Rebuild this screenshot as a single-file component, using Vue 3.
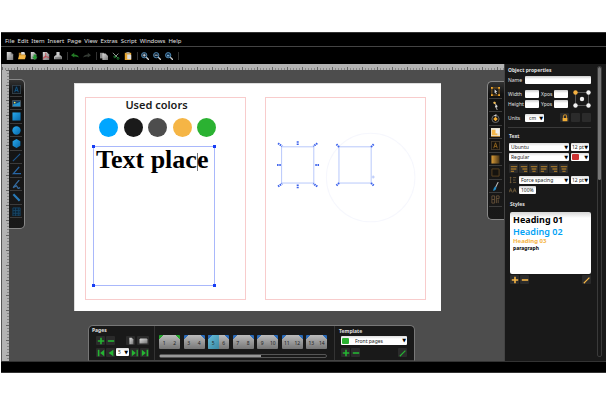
<script setup>
import { h, ref } from 'vue'

const shapes = {
  doc: '<path d="M1 0h5l3 3v7H1z" fill="url(#silver)"/><path d="M6 0v3h3" fill="#777"/>',
  open: '<path d="M1 1h3l1 1h4v6H1z" fill="#b7822a"/><path d="M4 0h4l1 3H4z" fill="#ddd"/><path d="M0 9l1.500-5H10L8.500 9z" fill="#f5b745"/>',
  save: '<path d="M1 0h4l3 3v6H1z" fill="url(#silver)"/><path d="M4.500 3h3v3H9.500L6 10 2.500 6h2z" fill="#279a35"/>',
  pdf: '<path d="M1 0h5l3 3v7H1z" fill="url(#silver)"/><path d="M1.500 9C5 6 5 4 4.500 1M1.500 7C4 5 6 6 9 7" fill="none" stroke="#c5303a"/>',
  print: '<path d="M3 0h4v5H3z" fill="#ccc"/><path d="M0 9V6l2-2h6l2 2v3z" fill="url(#silver)"/><path d="M1 7.500h8" stroke="#555"/>',
  undo: '<path d="M0 4l4-3v2c3 0 5 1 6 4-2-1.500-4-1.500-6-1.500V7z" fill="#237b25"/>',
  redo: '<path d="M10 4L6 1v2C3 3 1 4 0 7c2-1.500 4-1.500 6-1.500V7z" fill="#343a34"/>',
  copy: '<path d="M0 1h5v7H0z" fill="#888"/><path d="M3 2h4l3 3v5H3z" fill="url(#silver)"/>',
  cut: '<path d="M1 1l6 6M8 2L4 6" stroke="#999" stroke-width="1.200"/><circle cx="3.500" cy="6" r="1.200" fill="none" stroke="#239638"/><circle cx="7.500" cy="8" r="1.200" fill="none" stroke="#239638"/>',
  paste: '<path d="M1 1h8v9H1z" fill="#e5a52e"/><path d="M3 0h4v2H3z" fill="#999"/><path d="M4 3h4l1 1v5H4z" fill="#ddd"/>',
  zoomIn: '<path d="M6 6l4 4" stroke="#ccc" stroke-width="1.600"/><circle cx="4" cy="4" r="3.300" fill="#061a2d" stroke="#5b95c0" stroke-width="1.100"/><path d="M2 4h4M4 2v4" stroke="#eee"/>',
  zoomOut: '<path d="M6 6l4 4" stroke="#ccc" stroke-width="1.600"/><circle cx="4" cy="4" r="3.300" fill="#061a2d" stroke="#5b95c0" stroke-width="1.100"/><path d="M2 4h4" stroke="#eee"/>',
  zoomFit: '<path d="M6 6l4 4" stroke="#ccc" stroke-width="1.600"/><circle cx="4" cy="4" r="3.300" fill="#0b2b48" stroke="#5b95c0" stroke-width="1.100"/><path d="M2.500 3.500h3v2h-3z" fill="#7ba8ca"/>',
  textBlue: '<rect x=".500" y=".500" width="9" height="9" fill="#101820" stroke="#34414a"/><path d="M3 8l2-6 2 6M3.500 6h3" fill="none" stroke="#125a8c"/>',
  image: '<rect x="0" y="1" width="10" height="8" rx="1" fill="#4c5358"/><path d="M1 2h8v6H1z" fill="#123e64"/><path d="M1 8V6l4-1 4-2v5z" fill="#2190ca"/><circle cx="3" cy="4" r="1" fill="#f1dd59"/>',
  square: '<path d="M.500.500h9v9h-9z" fill="url(#blue)"/>',
  disc: '<circle cx="5" cy="5" r="4.600" fill="url(#blue)"/>',
  hexagon: '<path d="M5 0l4.300 2.500v5L5 10 .700 7.500v-5z" fill="url(#blue)"/>',
  line: '<path d="M1 9l8-8" stroke="#1c568e" stroke-width="1.200"/>',
  angle: '<path d="M8 1L1.500 8.500H10" fill="none" stroke="#2866a5" stroke-width="1.500"/>',
  bezier: '<path d="M8 0L1.500 8M1 8.500l4-2 2 3 2-1" fill="none" stroke="#356a9d" stroke-width="1.400"/>',
  pencil: '<path d="M1.500 1.500l7 7" stroke="#2879b6" stroke-width="2.400"/>',
  table: '<path d="M1 1h8v9H1zM1 4h8M1 7h8M4 1v9M7 1v9" fill="#0b2130" stroke="#174668"/>',
  select: '<path d="M1 1h8v8H1z" fill="none" stroke="#8c601b"/><path d="M0 0h2v2H0zM8 0h2v2H8zM0 8h2v2H0zM8 8h2v2H8z" fill="#f1a82f"/><path d="M4 2.500l3 3H5.500l1 2-1 .500-.700-2L4 7z" fill="#ddd"/>',
  node: '<path d="M3 1l3 4-1 1 2 4" fill="none" stroke="#999" stroke-width="1.200"/><circle cx="4" cy="2" r="1.300" fill="#f1bb50"/><circle cx="6" cy="6" r="1.200" fill="#ddd"/>',
  rotate: '<circle cx="5" cy="5.500" r="4" fill="none" stroke="#777"/><path d="M5 3l2.500 2.500L5 8 2.500 5.500z" fill="#f5ad31"/><path d="M3 2l3-2v3z" fill="#ccc"/>',
  scale: '<path d="M0 0h10v10H0z" fill="#e9e1cf"/><path d="M1 2h6v6H1z" fill="#f4b648"/><path d="M5 1h4v5H5z" fill="#eee"/><path d="M0 9.500h10" stroke="#a46e1b"/>',
  textGold: '<rect x=".500" y=".500" width="9" height="9" fill="#17130d" stroke="#453a2b"/><path d="M3 8l2-6 2 6M3.500 6h3" fill="none" stroke="#94651d"/>',
  gradient: '<path d="M.500.500h9v9h-9z" fill="url(#goldfade)"/>',
  frame: '<path d="M1 1h8v8H1z" fill="#15130f" stroke="#5d4522"/>',
  brush: '<path d="M8 0L5 6" stroke="#bbb" stroke-width="1.200"/><path d="M4.500 5l1.500 1C5.500 9 4 10 2 9.500 3 8.500 3 6 4.500 5z" fill="#258dc7"/>',
  effects: '<path d="M1 1h3v8H1zM1 5h3M6 1v8M6 1h3v3H6M8 5v4" fill="none" stroke="#675139"/>',
  plus: '<path d="M5 1v8M1 5h8" stroke="currentColor" stroke-width="2"/>',
  minus: '<path d="M1 5h8" stroke="currentColor" stroke-width="2"/>',
  edit: '<path d="M2 8l6-6M1 9l2-2" stroke="currentColor" stroke-width="1.600"/>',
  first: '<path d="M1 1v8h2V1zM9 1L4 5l5 4z" fill="currentColor"/>',
  prev: '<path d="M8 1L2 5l6 4z" fill="currentColor"/>',
  next: '<path d="M1 1l5 4-5 4zM7 1v8h1.500V1z" fill="currentColor"/>',
  last: '<path d="M1 1l5 4-5 4zM7 1v8h2V1z" fill="currentColor"/>',
  single: '<path d="M3 1h3l2 2v6H3z" fill="url(#silver)"/>',
  spread: '<path d="M1 2h8l1 1v5H0V3z" fill="url(#silver)"/>',
  lock: '<path d="M3 5V3a2 2 0 0 1 4 0v2" fill="none" stroke="#c98d2b" stroke-width="1.300"/><path d="M2 5h6v4H2z" fill="#f2ae36"/>',
  alignLeft: '<path d="M1 2h8M1 5h7M1 8h4" stroke="#9b7029" stroke-width="1.700"/>',
  alignRight: '<path d="M1 2h8M3 5h6M5 8h4" stroke="#9b7029" stroke-width="1.700"/>',
  alignCenter: '<path d="M1 2h8M2 5h6M3 8h4" stroke="#9b7029" stroke-width="1.700"/>',
  lineSpace: '<path d="M2 1v8M1 2h2M1 8h2M5 2h4M5 5h3M5 8h4" stroke="#77613d"/>',
  kern: '<path d="M0 8l2-5 2 5M1 6h2M5 8l2-5 2 5M6 6h2" fill="none" stroke="#77613d"/>',
}
const Icon = (props) => h('svg', { viewBox: '0 0 10 10', 'aria-hidden': 'true', innerHTML: shapes[props.name] })
Icon.props = ['name']

const menus = ['File', 'Edit', 'Item', 'Insert', 'Page', 'View', 'Extras', 'Script', 'Windows', 'Help']
const toolGroups = [
  ['doc', 'open', 'save', 'pdf', 'print'],
  ['undo', 'redo'],
  ['copy', 'cut', 'paste'],
  ['zoomIn', 'zoomOut', 'zoomFit'],
]
const drawTools = ['textBlue', 'image', 'square', 'disc', 'hexagon', 'line', 'angle', 'bezier', 'pencil', 'table']
const editTools = ['select', 'node', 'rotate', 'scale', 'textGold', 'gradient', 'frame', 'brush', 'effects']
const swatches = ['blue', 'black', 'grey', 'amber', 'green']
const spreads = [[1, 2], [3, 4], [5, 6], [7, 8], [9, 10], [11, 12], [13, 14]]
const aligns = ['alignLeft', 'alignRight', 'alignCenter', 'alignLeft', 'alignRight', 'alignCenter']
const current = ref(5)
</script>

<template>
  <div class="screen">
    <svg class="defs" aria-hidden="true">
      <defs>
        <linearGradient id="silver" x2="1" y2="1"><stop stop-color="#ddd" /><stop offset="1" stop-color="#777" /></linearGradient>
        <linearGradient id="blue" x2="1" y2="1"><stop stop-color="#28a9ee" /><stop offset="1" stop-color="#0868a8" /></linearGradient>
        <linearGradient id="goldfade"><stop stop-color="#db9d38" /><stop offset="1" stop-color="#4a3517" /></linearGradient>
      </defs>
    </svg>
    <div class="app">
      <nav class="menubar">
        <button v-for="m in menus" :key="m">{{ m }}</button>
      </nav>
      <div class="toolbar">
        <div v-for="(g, i) in toolGroups" :key="i" class="group">
          <button v-for="t in g" :key="t" :aria-label="t"><Icon :name="t" /></button>
        </div>
      </div>

      <div class="main">
        <div class="canvas">
          <div class="ruler-top"></div>
          <div class="ruler-left"></div>
          <div class="workspace">
            <div class="dock left">
              <button v-for="t in drawTools" :key="t" :aria-label="t"><Icon :name="t" /></button>
            </div>
            <div class="center">
              <div class="document">
                <section class="page">
                  <h1>Used colors</h1>
                  <div class="swatches"><i v-for="s in swatches" :key="s" :class="s"></i></div>
                  <div class="frame">
                    <b class="h tl"></b><b class="h tr"></b><b class="h bl"></b><b class="h br"></b>
                    Text plac<span class="caret"></span>e
                  </div>
                </section>
                <section class="page">
                  <svg class="objects" viewBox="0 0 158 200">
                    <circle cx="104" cy="79" r="44" fill="none" stroke="#f6f7fd" />
                    <g fill="none" stroke="#b9c9fb">
                      <rect x="15.500" y="48.500" width="32" height="36" />
                      <rect x="72.500" y="48.500" width="32" height="36" />
                    </g>
                    <g stroke="#3c62ec" stroke-width="2" stroke-dasharray="1.500 .7">
                      <path d="M12 45l4 3M51 45l-4 3M12 88l4-3M51 88l-4-3M31.500 43v4M31.500 86v4M11 66.500h4M49 66.500h4" />
                      <path d="M70 46l3 3M107 46l-3 3M70 87l3-3M107 87l-3-3" />
                    </g>
                    <path d="M105 78.500h3M106.500 77v3" stroke="#b5c6fa" />
                  </svg>
                </section>
              </div>

              <div class="pagesdock">
                <section class="pages">
                  <h2>Pages</h2>
                  <div class="row green">
                    <button class="tile" aria-label="Add page"><Icon name="plus" /></button>
                    <button class="tile" aria-label="Remove page"><Icon name="minus" /></button>
                    <button class="tile push" aria-label="Single page"><Icon name="single" /></button>
                    <button class="tile wide" aria-label="Spread"><Icon name="spread" /></button>
                  </div>
                  <div class="row green nav">
                    <button class="tile" aria-label="First"><Icon name="first" /></button>
                    <button class="tile" aria-label="Previous"><Icon name="prev" /></button>
                    <span class="drop pageno"><select aria-label="Page"><option>5</option></select></span>
                    <button class="tile" aria-label="Next"><Icon name="next" /></button>
                    <button class="tile" aria-label="Last"><Icon name="last" /></button>
                  </div>
                </section>
                <section class="strip">
                  <div class="thumbs">
                    <button v-for="s in spreads" :key="s[0]" :class="{ master: s[0] === 1 }" @click="current = s[0]">
                      <span v-for="n in s" :key="n" :class="{ on: n === current }">{{ n }}</span>
                    </button>
                  </div>
                  <div class="hscroll"><i></i></div>
                </section>
                <section class="template">
                  <h2><label for="tpl">Template</label></h2>
                  <span class="drop"><i class="chip green-chip"></i><select id="tpl"><option>Front pages</option></select></span>
                  <div class="row green">
                    <button class="tile" aria-label="Add template"><Icon name="plus" /></button>
                    <button class="tile" aria-label="Remove template"><Icon name="minus" /></button>
                    <button class="tile push" aria-label="Edit template"><Icon name="edit" /></button>
                  </div>
                </section>
              </div>
            </div>
            <div class="dock right">
              <button v-for="t in editTools" :key="t" :aria-label="t"><Icon :name="t" /></button>
            </div>
          </div>
        </div>

        <aside class="panel">
          <div class="props">
            <h2>Object properties</h2>
            <div class="name"><label for="nm">Name</label><input id="nm" type="text" /></div>
            <div class="geometry">
              <div class="fields">
                <label for="w">Width</label><input id="w" type="text" />
                <label for="x">Xpos</label><input id="x" type="text" />
                <label for="hh">Height</label><input id="hh" type="text" />
                <label for="y">Ypos</label><input id="y" type="text" />
              </div>
              <svg class="anchor" viewBox="0 0 18 18">
                <rect x="2.500" y="2.500" width="13" height="13" fill="none" stroke="#555" />
                <circle cx="2.500" cy="2.500" r="2.200" fill="#f5b140" />
                <g fill="#f2f2f2"><circle cx="15.500" cy="2.500" r="2.200" /><circle cx="2.500" cy="15.500" r="2.200" /><circle cx="15.500" cy="15.500" r="2.200" /><circle cx="9" cy="9" r="2.200" /></g>
              </svg>
            </div>
            <div class="units">
              <label for="u">Units</label>
              <span class="drop"><select id="u"><option>cm</option></select></span>
              <button class="tile push" aria-label="Lock"><Icon name="lock" /></button>
              <button class="tile" aria-label="Option one"></button>
              <button class="tile" aria-label="Option two"></button>
            </div>
          </div>

          <div class="props text">
            <h2>Text</h2>
            <div class="pair">
              <span class="drop"><select aria-label="Font"><option>Ubuntu</option></select></span>
              <span class="drop small"><select aria-label="Size"><option>12 pt</option></select></span>
              <span class="drop"><select aria-label="Style"><option>Regular</option></select></span>
              <span class="drop small"><i class="chip red-chip"></i><select aria-label="Color"><option></option></select></span>
            </div>
            <div class="row aligns">
              <button v-for="(a, i) in aligns" :key="i" class="tile" :aria-label="a"><Icon :name="a" /></button>
            </div>
            <div class="spacing">
              <Icon name="lineSpace" />
              <span class="drop"><select aria-label="Line spacing"><option>Force spacing</option></select></span>
              <span class="drop small"><select aria-label="Leading"><option>12 pt</option></select></span>
              <Icon name="kern" />
              <input class="percent" type="text" value="100%" aria-label="Kerning" />
            </div>
          </div>

          <div class="props styles">
            <h2>Styles</h2>
            <div class="list">
              <p class="s1">Heading 01</p>
              <p class="s2">Heading 02</p>
              <p class="s3">Heading 03</p>
              <p class="s4">paragraph</p>
            </div>
            <div class="row gold">
              <button class="tile" aria-label="Add style"><Icon name="plus" /></button>
              <button class="tile" aria-label="Remove style"><Icon name="minus" /></button>
              <button class="tile push" aria-label="Edit style"><Icon name="edit" /></button>
            </div>
          </div>
          <div class="vscroll"><i></i></div>
        </aside>
      </div>
      <footer class="status"></footer>
    </div>
  </div>
</template>

<style>
body { margin: 0; background: #fff; }
</style>

<style scoped>
* { box-sizing: border-box; }
.screen { min-height: 100vh; display: flex; padding: 32px 0 33px 1px; font: 5px/8px "Noto Sans", "Open Sans", sans-serif; color: #e0e0e0; }
.defs { position: absolute; width: 0; height: 0; }
.app { flex: 1; min-width: 0; display: flex; flex-direction: column; background: #000; border-bottom: 1px solid #333; }
button { padding: 0; border: 0; background: none; color: inherit; font: inherit; display: block; }
svg { display: block; }
h1, h2, p { margin: 0; }
h2 { font-size: 5px; line-height: 8px; font-weight: 700; }

.menubar { height: 15px; display: flex; gap: 3px; padding: 2px 4px 0; border-top: 1px solid #333; border-bottom: 1px solid #444; font-size: 6px; }
.toolbar { height: 17px; display: flex; align-items: center; padding-left: 5px; }
.group { display: flex; gap: 4px; padding-right: 5px; margin-right: 3px; border-right: 1px solid #333; }
.group svg { width: 8px; height: 8px; }

.main { flex: 1; display: flex; border-left: 1px solid #555; }
.canvas { flex: 1; min-width: 0; display: grid; grid-template: 6px 1fr / 7px 1fr; }
.ruler-top { grid-column: 1 / 3; background: repeating-linear-gradient(90deg, #666 0 1px, transparent 1px 15px) 0 3px / 100% 3px no-repeat, repeating-linear-gradient(90deg, #888 0 1px, transparent 1px 3px) 0 4px / 100% 2px no-repeat, #b3b3b3; }
.ruler-left { background: repeating-linear-gradient(#666 0 1px, transparent 1px 15px) 4px 0 / 3px 100% no-repeat, repeating-linear-gradient(#888 0 1px, transparent 1px 3px) 5px 0 / 2px 100% no-repeat, #b3b3b3; }
.workspace { background: #4d4d4d; display: flex; align-items: flex-start; min-width: 0; }
.dock { display: grid; background: linear-gradient(#333, #111 12px, #191919); border: 1px solid #888; }
.dock.left { width: 16px; margin-top: 9px; padding: 3px 2px 10px 1px; border-left: 0; border-radius: 0 5px 5px 0; grid-template-rows: repeat(5, 14px 13px); height: 150px; }
.dock.right { width: 17px; margin-top: 11px; padding: 3px 2px 10px 1px; border-right: 0; border-radius: 5px 0 0 5px; grid-template-rows: repeat(4, 14px 13px) 14px; height: 139px; }
.dock button { display: grid; place-items: center; border-bottom: 1px solid #3c3c3c; }
.dock svg { width: 9px; height: 9px; }

.center { flex: 1; min-width: 0; align-self: stretch; display: flex; flex-direction: column; justify-content: space-between; padding-top: 13px; }
.document { margin: 0 46px 0 49px; height: 228px; padding: 13px 15px 11px 10px; background: #fff; border: 1px solid #ddd; border-width: 1px 0 0 1px; display: grid; grid-template-columns: 1fr 1fr; gap: 19px; }
.page { border: 1px solid #f8cccc; min-width: 0; }
.page h1 { padding-right: 18px; margin-top: -1px; text-align: center; font-size: 11px; line-height: 15px; font-weight: 600; color: #1a1a1a; }
.swatches { display: flex; justify-content: space-between; padding: 6px 29px 0 13px; }
.swatches i { width: 19px; height: 19px; border-radius: 50%; }
.blue { background: #00a6ff; } .black { background: #1a1a1a; } .grey { background: #4d4d4d; } .amber { background: #f5b545; } .green { color: #25b532; }
.swatches .green { background: #2bb232; }
.frame { position: relative; height: 140px; margin: 9px 30px 0 7px; padding-left: 2px; border: 1px solid #a9b8fb; font: 700 26px/26px "Liberation Serif", serif; white-space: nowrap; color: #000; }
.caret { display: inline-block; width: 1px; height: 18px; margin-right: -1px; background: #777; vertical-align: -3px; }
.h { position: absolute; width: 3px; height: 3px; background: #173df5; }
.tl { left: -2px; top: -2px; } .tr { right: -2px; top: -2px; } .bl { left: -2px; bottom: -2px; } .br { right: -2px; bottom: -2px; }
.objects { width: 100%; }

.pagesdock { margin: 0 72px 0 63px; height: 36px; display: flex; background: #191919; border: 1px solid #777; border-bottom-color: #444; border-radius: 5px 5px 0 0; }
.pages { width: 66px; padding-left: 3px; border-right: 1px solid #333; }
.pages .row { padding: 2px 5px 0 4px; gap: 1px; }
.pages .nav { padding-top: 3px; }
.row { display: flex; }
.gold { color: #f5b545; }
.tile { width: 9px; height: 9px; flex: none; display: grid; place-items: center; background: #2b2b2b; border-radius: 1px; }
.tile svg { width: 8px; height: 8px; }
.tile.wide { width: 12px; margin-left: 1px; }
.wide svg { width: 9px; }
.push { margin-left: auto; }
.drop { position: relative; display: flex; align-items: center; height: 8px; border-radius: 1px; background: linear-gradient(#ddd, #fff 3px); color: #222; min-width: 0; }
.drop::after { content: "▼"; position: absolute; right: 1px; top: 0; font: 5px/8px "DejaVu Sans", sans-serif; color: #000; pointer-events: none; }
.drop select { appearance: none; flex: 1; min-width: 0; width: 100%; height: 8px; padding: 0 0 0 2px; border: 0; background: none; font: inherit; color: inherit; }
.drop.small select { padding-left: 1px; }
.pageno { width: 13px; flex: none; }
.chip { width: 7px; height: 6px; margin-left: 1px; flex: none; border-radius: 1px; }
.green-chip { background: #2bb232; } .red-chip { background: #c33; }
.strip { flex: 1; min-width: 0; padding: 9px 7px 0 4px; }
.thumbs { display: flex; justify-content: space-between; }
.thumbs button { width: 21px; height: 14px; display: flex; border-radius: 1px; background: linear-gradient(135deg, #296ab8 3px, transparent 3px), linear-gradient(225deg, #296ab8 3px, transparent 3px), linear-gradient(#bbb, #777); color: #222; overflow: hidden; }
.thumbs .master { background: linear-gradient(135deg, #24a52c 3px, transparent 3px), linear-gradient(225deg, #24a52c 3px, transparent 3px), linear-gradient(#bbb, #777); }
.thumbs span { flex: 1; line-height: 17px; height: 14px; text-align: center; }
.thumbs .on { background: linear-gradient(135deg, #296ab8 3px, #5eb5d2 3px, #3c88a2); }
.hscroll { height: 4px; margin-top: 5px; border: 1px solid #555; border-radius: 2px; }
.hscroll i { display: block; width: 61%; height: 2px; background: #999; }
.template { width: 80px; padding: 1px 7px 0 4px; border-left: 1px solid #333; }
.template .drop { margin: 1px 0 3px 2px; height: 9px; }
.template .chip { margin-right: 4px; }
.template .row { padding-left: 2px; gap: 1px; }

.panel { position: relative; width: 102px; padding: 2px 15px 0 3px; background: #191919; border-left: 1px solid #444; }
.panel input { width: 100%; min-width: 0; height: 8px; padding: 0 2px; border: 0; border-radius: 1px; background: linear-gradient(#ccc, #fff 3px); font: inherit; color: #222; }
.panel label { line-height: 8px; }
.name { display: grid; grid-template-columns: 17px 1fr; margin-top: 2px; }
.geometry { display: flex; justify-content: space-between; margin-top: 6px; }
.fields { display: grid; grid-template-columns: 17px 14px 15px 14px; row-gap: 1px; }
.fields label:nth-of-type(even) { padding-left: 2px; }
.anchor { width: 18px; height: 18px; }
.units { display: flex; align-items: center; gap: 2px; padding: 5px 0; border-bottom: 1px solid #3a3a3a; }
.units label { width: 15px; }
.units .drop { width: 19px; }
.units .drop select { padding-left: 4px; }
.text { padding: 4px 2px 0 1px; }
.pair { display: grid; grid-template-columns: 1fr 18px; gap: 2px; margin-top: 3px; }
.aligns { gap: 1px; margin-top: 3px; }
.spacing { display: grid; grid-template-columns: 8px 1fr 18px; gap: 2px; margin-top: 3px; }
.spacing svg { width: 8px; height: 8px; }
.panel .percent { width: 17px; }
.styles { padding: 6px 0 0 2px; }
.list { height: 62px; margin: 4px 0 1px; padding: 2px 3px; border-radius: 2px; background: linear-gradient(#d5d5d5, #fff 6px); font-weight: 700; color: #000; }
.s1 { font-size: 9px; line-height: 12px; }
.s2 { font-size: 9px; line-height: 11px; font-weight: 600; color: #00a2f5; }
.s3 { font-size: 6px; line-height: 8px; color: #f5b545; }
.s4 { font-size: 5px; line-height: 7px; }
.styles .row { gap: 1px; }
.vscroll { position: absolute; right: 4px; top: 2px; bottom: 4px; width: 5px; border: 1px solid #3a3a3a; border-radius: 2px; }
.vscroll i { display: block; height: 39%; border-radius: 2px; background: #777; }
.status { height: 11px; border-top: 1px solid #333; }
</style>
